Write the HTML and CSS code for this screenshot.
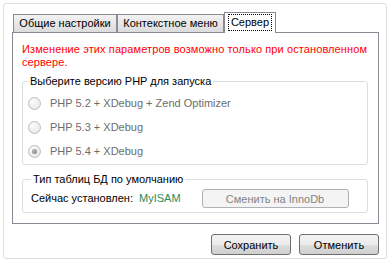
FILE: index.html
```html
<!DOCTYPE html>
<html lang="ru">
<head>
  <meta charset="UTF-8">
  <title>Настройки</title>
  <link rel="stylesheet" href="styles.css">
</head>
<body>
  <div class="frame">
    <div class="tabs">
      <div class="tab tab-general">Общие настройки</div>
      <div class="tab tab-menu">Контекстное меню</div>
      <div class="tab tab-server active"><span class="focus">Сервер</span></div>
    </div>

    <div class="panel">
      <p class="warning">Изменение этих параметров возможно только при остановленном сервере.</p>

      <fieldset class="group group-php">
        <legend>Выберите версию PHP для запуска</legend>
        <div class="radio disabled"><span class="dot"></span>PHP 5.2 + XDebug + Zend Optimizer</div>
        <div class="radio disabled"><span class="dot"></span>PHP 5.3 + XDebug</div>
        <div class="radio disabled checked"><span class="dot"></span>PHP 5.4 + XDebug</div>
      </fieldset>

      <fieldset class="group group-db">
        <legend>Тип таблиц БД по умолчанию</legend>
        <div class="db-row">
          <span class="db-label">Сейчас установлен:</span>
          <span class="db-value">MyISAM</span>
          <button class="btn btn-switch" disabled>Сменить на InnoDb</button>
        </div>
      </fieldset>
    </div>

    <div class="actions">
      <button class="btn">Сохранить</button>
      <button class="btn">Отменить</button>
    </div>
  </div>
</body>
</html>
```

FILE: styles.css
```css
body {
  margin: 0;
  background: #fff;
  font-family: 'Liberation Sans', Arial, sans-serif;
  font-size: 11px;
  line-height: 13px;
  color: #000;
}
.frame {
  margin: 3px;
  width: 384px;
  height: 256px;
  box-sizing: border-box;
  border: 1px solid #d9e0e5;
  border-radius: 3px;
  padding: 8px 7px 0 8px;
}
.tabs {
  display: flex;
  align-items: flex-end;
  height: 20px;
  padding-left: 1px;
}
.tab {
  box-sizing: border-box;
  height: 18px;
  border: 1px solid #898c95;
  border-bottom: none;
  background: linear-gradient(to bottom, #f2f2f2, #dcdcdc);
  text-align: center;
  line-height: 17px;
  white-space: nowrap;
}
.tab-general { width: 104px; }
.tab-menu { width: 107px; }
.tab-server { width: 52px; }
.tab.active {
  position: relative;
  z-index: 1;
  height: 21px;
  margin-bottom: -1px;
  background: #fff;
  line-height: 15px;
  padding-top: 1px;
}
.focus {
  display: inline-block;
  padding: 0 2px;
  border: 1px dotted #000;
  line-height: 15px;
}
.panel {
  box-sizing: border-box;
  height: 192px;
  border: 1px solid #898c95;
  padding: 10px 9px 0 9px;
}
.warning {
  margin: 0;
  color: #ff0000;
  letter-spacing: 0.1px;
}
.group {
  margin: 6px 0 0 0;
  width: 346px;
  box-sizing: border-box;
  border: 1px solid #d5dfe5;
  border-radius: 3px;
  padding: 0 8px 0 5px;
}
.group legend {
  padding: 0 2px;
}
.group-php {
  height: 90px;
  padding-top: 3px;
}
.radio {
  display: flex;
  align-items: center;
  height: 24px;
  color: #6d6d6d;
}
.dot {
  position: relative;
  width: 11px;
  height: 11px;
  border: 1px solid #bcbcbc;
  border-radius: 50%;
  background: radial-gradient(circle at 40% 35%, #fbfbfb, #e2e2e2);
  margin-right: 9px;
  flex: none;
}
.radio.checked .dot::after {
  content: "";
  position: absolute;
  left: 3px;
  top: 3px;
  width: 5px;
  height: 5px;
  border-radius: 50%;
  background: radial-gradient(circle at 40% 35%, #b5b5b5, #7d7d7d);
}
.group-db {
  margin-top: 8px;
  height: 40px;
  padding-top: 3px;
  padding-left: 8px;
}
.db-row {
  display: flex;
  align-items: center;
}
.db-value {
  margin-left: 6px;
  color: #2e8b57;
}
.btn {
  box-sizing: border-box;
  height: 21px;
  border: 1px solid #707070;
  border-radius: 3px;
  background: linear-gradient(to bottom, #f3f3f3 0%, #ebebeb 50%, #dddddd 51%, #cfcfcf 100%);
  font-family: inherit;
  font-size: 11px;
  color: #000;
  padding: 0;
}
.btn-switch {
  margin-left: 21px;
  width: 147px;
  height: 19px;
  border-color: #adb2b5;
  background: #f4f4f4;
  color: #838383;
}
.actions {
  display: flex;
  justify-content: flex-end;
  gap: 8px;
  margin-top: 10px;
}
.actions .btn {
  width: 80px;
}
```
